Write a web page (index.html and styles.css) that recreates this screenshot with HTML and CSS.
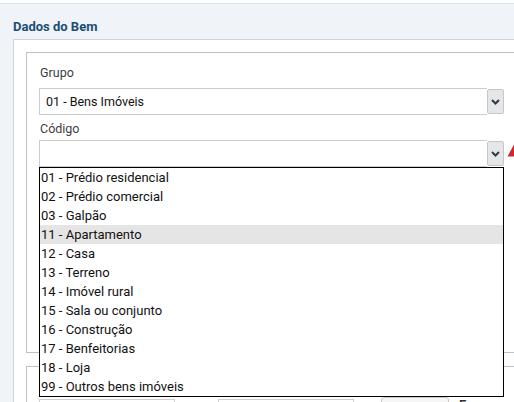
FILE: index.html
```html
<!DOCTYPE html>
<html lang="pt">
<head>
<meta charset="utf-8">
<title>Dados do Bem</title>
<link rel="stylesheet" href="styles.css">
</head>
<body>
<div class="section">
  <h2 class="title">Dados do Bem</h2>
  <div class="panel">
    <div class="box">
      <div class="field field-grupo">
        <label class="label">Grupo</label>
        <div class="select">
          <div class="select-value">01 - Bens Imóveis</div>
          <div class="select-btn">
            <svg width="9" height="6" viewBox="0 0 9 6"><path d="M1 1 L4.5 4.5 L8 1" fill="none" stroke="#333a44" stroke-width="2"/></svg>
          </div>
        </div>
      </div>
      <div class="field field-codigo">
        <label class="label label-codigo">Código</label>
        <div class="select select-open">
          <div class="select-value"></div>
          <div class="select-btn">
            <svg width="9" height="6" viewBox="0 0 9 6"><path d="M1 1 L4.5 4.5 L8 1" fill="none" stroke="#333a44" stroke-width="2"/></svg>
          </div>
          <svg class="warn" width="14" height="13" viewBox="0 0 14 13"><path d="M7 0.5 L13.5 12.5 L0.5 12.5 Z" fill="#d7262b"/></svg>
          <ul class="dropdown">
            <li>01 - Prédio residencial</li>
            <li>02 - Prédio comercial</li>
            <li>03 - Galpão</li>
            <li class="hover">11 - Apartamento</li>
            <li>12 - Casa</li>
            <li>13 - Terreno</li>
            <li>14 - Imóvel rural</li>
            <li>15 - Sala ou conjunto</li>
            <li>16 - Construção</li>
            <li>17 - Benfeitorias</li>
            <li>18 - Loja</li>
            <li>99 - Outros bens imóveis</li>
          </ul>
        </div>
      </div>
    </div>
    <div class="box box-second">
      <div class="row">
        <div class="input input-a"></div>
        <div class="input input-b"></div>
        <div class="btn"></div>
        <span class="em">Em</span>
      </div>
    </div>
  </div>
</div>
</body>
</html>
```
FILE: styles.css
```css
html, body {
  margin: 0;
  padding: 0;
  overflow: hidden;
  background: #ffffff;
}
body {
  width: 514px;
  height: 402px;
  font-family: Roboto, "Liberation Sans", Arial, sans-serif;
  padding-top: 3px;
  box-sizing: border-box;
}
.section {
  border-top: 1px solid #dfe4ea;
  background: #f0f3f8;
  padding-left: 13px;
  height: 420px;
}
.title {
  margin: 0;
  padding-top: 15px;
  height: 20px;
  font-size: 13px;
  line-height: 16px;
  font-weight: 700;
  color: #1b4e73;
}
.panel {
  width: 620px;
  background: #ffffff;
  border-top: 1px solid #ccd4dd;
  border-left: 1px solid #ccd4dd;
  padding: 12px 0 0 12px;
  height: 400px;
}
.box {
  border: 1px solid #b9c3cd;
  border-right: none;
  height: 287px;
  padding: 12px 0 0 12px;
}
.box-second {
  margin-top: 13px;
  height: 60px;
  padding-top: 30px;
}
.field-grupo .label { margin-bottom: 7px; }
.field-codigo { margin-top: 6px; }
.label {
  display: block;
  padding-left: 1px;
  font-size: 12.5px;
  line-height: 16px;
  color: #3d3d3d;
}
.label-codigo { margin-bottom: 3px; }
.select {
  position: relative;
  display: flex;
  align-items: center;
  width: 465px;
  height: 27px;
}
.select-value {
  flex: 1;
  height: 27px;
  box-sizing: border-box;
  border: 1px solid #cccccc;
  border-right: none;
  padding-left: 6px;
  font-size: 12.5px;
  line-height: 25px;
  color: #111111;
}
.select-btn {
  width: 17px;
  height: 25px;
  box-sizing: border-box;
  border: 1px solid #c6c6c9;
  border-radius: 2px;
  background: #e5e6ea;
  display: flex;
  align-items: center;
  justify-content: center;
}
.warn {
  position: absolute;
  left: 468px;
  top: 4px;
}
.dropdown {
  position: absolute;
  left: 0;
  top: 27px;
  width: 465px;
  box-sizing: border-box;
  margin: 0;
  padding: 0;
  list-style: none;
  border: 1px solid #000000;
  background: #ffffff;
  z-index: 5;
}
.dropdown li {
  height: 19px;
  line-height: 19px;
  padding-left: 1px;
  font-size: 13px;
  color: #111111;
}
.dropdown li.hover {
  background: #e5e5e5;
}
.row {
  display: flex;
  align-items: flex-start;
}
.input {
  height: 24px;
  border: 1px solid #cfcfcf;
  box-sizing: border-box;
}
.input-a { width: 136px; margin-top: 2px; }
.input-b { width: 136px; margin-left: 43px; margin-top: 2px; }
.btn {
  width: 68px;
  height: 24px;
  margin-left: 27px;
  border: 1px solid #c9c9c9;
  border-radius: 3px;
  background: #f6f6f6;
  box-sizing: border-box;
}
.em {
  margin-left: 10px;
  font-size: 13px;
  font-weight: 700;
  color: #333;
  line-height: 16px;
}
```
